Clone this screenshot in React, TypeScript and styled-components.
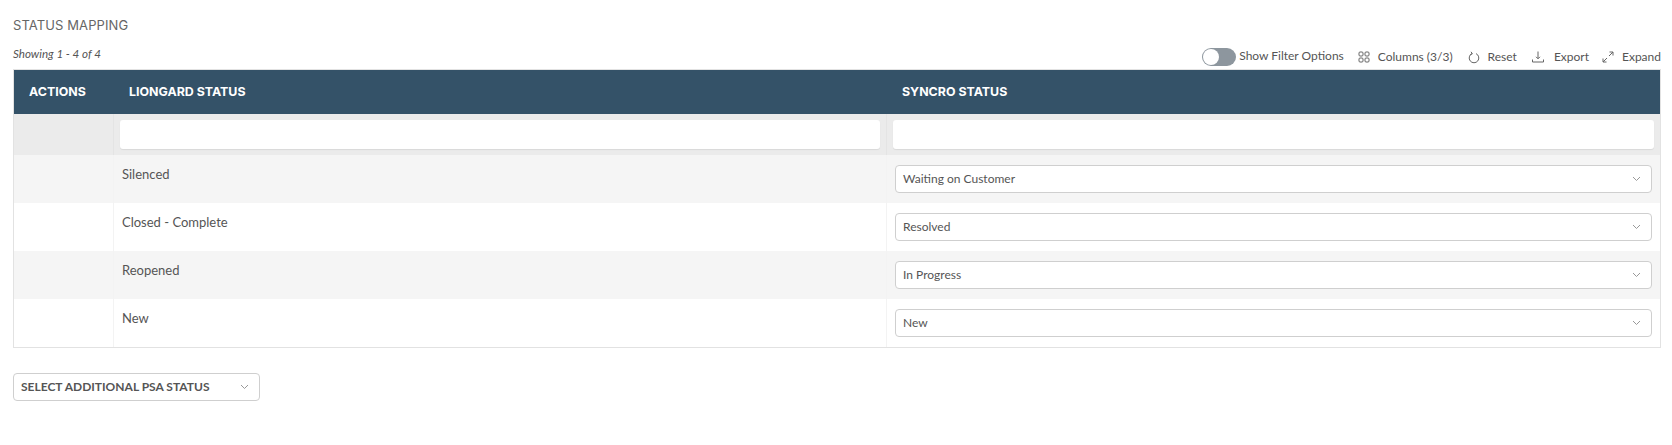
import React from "react";
import styled, { createGlobalStyle } from "styled-components";

const Global = createGlobalStyle`
  html, body { margin: 0; padding: 0; background: #fff; }
  body { font-family: Lato, "Liberation Sans", sans-serif; color: #555; }
  * { box-sizing: border-box; }
`;

const Page = styled.div`
  width: 1672px;
  height: 445px;
  padding: 17px 11px 0 13px;
  overflow: hidden;
`;
const Title = styled.h2`
  margin: 0;
  height: 16px;
  font: 400 13px/16px Inter, sans-serif;
  color: #666;
  letter-spacing: 0.1px;
`;
const Toolbar = styled.div`
  height: 36px;
  display: flex;
  align-items: flex-end;
  justify-content: space-between;
  padding-bottom: 3px;
`;
const Showing = styled.span`
  font-size: 11.6px;
  line-height: 16px;
  font-style: italic;
  color: #555;
  padding-bottom: 4px;
`;
const Actions = styled.div`
  display: flex;
  align-items: center;
`;
const Toggle = styled.span`
  width: 34px;
  height: 18px;
  border-radius: 9px;
  background: #8d969e;
  position: relative;
  margin-right: 3px;
  &::before {
    content: "";
    position: absolute;
    left: 1px;
    top: 1px;
    width: 16px;
    height: 16px;
    border-radius: 50%;
    background: #fff;
  }
`;
const ToolLabel = styled.span`
  font-size: 12px;
  line-height: 16px;
  color: #555;
`;
const FilterLabel = styled(ToolLabel)`
  margin-right: 14px;
  position: relative;
  top: -1px;
`;
const ToolButton = styled.span<{ $gap?: number; $inner?: number }>`
  display: flex;
  align-items: center;
  gap: ${(p) => p.$inner ?? 8}px;
  margin-left: ${(p) => p.$gap ?? 0}px;
  svg { display: block; color: #666; }
`;
const Table = styled.div`
  width: 1648px;
  border: 1px solid #e2e2e2;
  display: grid;
  grid-template-columns: 100px 773px 1fr;
`;
const HeadCell = styled.div<{ $pad: number }>`
  height: 44px;
  background: #345268;
  color: #fff;
  font: 700 12.4px/43px Inter, sans-serif;
  padding-left: ${(p) => p.$pad}px;
`;
const FilterCell = styled.div`
  height: 41px;
  background: #ebebeb;
  padding: 6px;
  border-right: 1px solid #e4e4e4;
  &:nth-child(3n) { border-right: 0; }
`;
const FilterInput = styled.input`
  display: block;
  width: 100%;
  height: 29px;
  border: 0;
  border-radius: 3px;
  background: #fff;
  box-shadow: 0 1px 1px rgba(0, 0, 0, 0.08);
`;
const Cell = styled.div<{ $odd: boolean }>`
  height: 48px;
  background: ${(p) => (p.$odd ? "#f5f5f5" : "#fff")};
  border-right: 1px solid #f3f3f3;
  &:nth-child(3n) { border-right: 0; }
`;
const TextCell = styled(Cell)`
  padding: 9px 0 0 8px;
  font-size: 13px;
  line-height: 20px;
  color: #555;
`;
const SelectCell = styled(Cell)`
  padding: 10px 8px 0 8px;
`;
const SelectBox = styled.div<{ $width?: number; $bold?: boolean }>`
  height: 28px;
  width: ${(p) => (p.$width ? `${p.$width}px` : "100%")};
  background: #fff;
  border: 1px solid #cfcfcf;
  border-radius: 4px;
  display: flex;
  align-items: center;
  justify-content: space-between;
  padding: 0 10px 1px 7px;
  font-size: 12px;
  font-weight: ${(p) => (p.$bold ? 700 : 400)};
  color: #555;
  svg { display: block; color: #999; }
`;
const Footer = styled.div`
  margin-top: 25px;
`;

const Chevron = () => (
  <svg width="9" height="6" viewBox="0 0 9 6" fill="none" stroke="currentColor" strokeWidth="1">
    <path d="M1 1l3.5 3.5L8 1" />
  </svg>
);

const ColumnsIcon = () => (
  <svg width="12" height="12" viewBox="0 0 12 12" fill="none" stroke="currentColor" strokeWidth="1">
    <rect x="1" y="1" width="4" height="4" rx="1" />
    <rect x="7" y="1" width="4" height="4" rx="1" />
    <rect x="1" y="7" width="4" height="4" rx="1" />
    <rect x="7" y="7" width="4" height="4" rx="1" />
  </svg>
);
const ResetIcon = () => (
  <svg width="12" height="13" viewBox="0 0 12 13" fill="none" stroke="currentColor" strokeWidth="1">
    <path d="M4 2.6A4.8 4.8 0 1 0 8 2.6" />
    <path d="M3 .8L4.4 2.8 2.3 3.6" />
  </svg>
);
const ExportIcon = () => (
  <svg width="12" height="12" viewBox="0 0 12 12" fill="none" stroke="currentColor" strokeWidth="1">
    <path d="M6 0.5v7M4 5.8l2 2 2-2" />
    <path d="M0.5 8.5v2.5h11v-2.5" />
  </svg>
);
const ExpandIcon = () => (
  <svg width="12" height="12" viewBox="0 0 12 12" fill="none" stroke="currentColor" strokeWidth="1">
    <path d="M7.5 1H11v3.5M11 1L7 5" />
    <path d="M4.5 11H1V7.5M1 11l4-4" />
  </svg>
);

const rows = [
  ["Silenced", "Waiting on Customer"],
  ["Closed - Complete", "Resolved"],
  ["Reopened", "In Progress"],
  ["New", "New"],
];

export default function App() {
  return (
    <Page>
      <Global />
      <Title>STATUS MAPPING</Title>
      <Toolbar>
        <Showing>Showing 1 - 4 of 4</Showing>
        <Actions>
          <Toggle />
          <FilterLabel>Show Filter Options</FilterLabel>
          <ToolButton><ColumnsIcon /><ToolLabel>Columns (3/3)</ToolLabel></ToolButton>
          <ToolButton $gap={15}><ResetIcon /><ToolLabel>Reset</ToolLabel></ToolButton>
          <ToolButton $gap={15} $inner={10}><ExportIcon /><ToolLabel>Export</ToolLabel></ToolButton>
          <ToolButton $gap={13}><ExpandIcon /><ToolLabel>Expand</ToolLabel></ToolButton>
        </Actions>
      </Toolbar>
      <Table>
        <HeadCell $pad={15}>ACTIONS</HeadCell>
        <HeadCell $pad={15}>LIONGARD STATUS</HeadCell>
        <HeadCell $pad={15}>SYNCRO STATUS</HeadCell>
        <FilterCell />
        <FilterCell><FilterInput aria-label="Liongard status filter" /></FilterCell>
        <FilterCell><FilterInput aria-label="Syncro status filter" /></FilterCell>
        {rows.map(([a, b], i) => (
          <React.Fragment key={a}>
            <Cell $odd={i % 2 === 0} />
            <TextCell $odd={i % 2 === 0}>{a}</TextCell>
            <SelectCell $odd={i % 2 === 0}>
              <SelectBox>{b}<Chevron /></SelectBox>
            </SelectCell>
          </React.Fragment>
        ))}
      </Table>
      <Footer>
        <SelectBox $width={247} $bold>SELECT ADDITIONAL PSA STATUS<Chevron /></SelectBox>
      </Footer>
    </Page>
  );
}
